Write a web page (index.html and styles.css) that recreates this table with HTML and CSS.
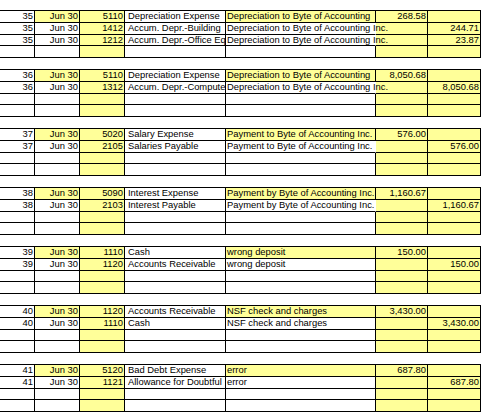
FILE: index.html
```html
<!DOCTYPE html>
<html>
<head>
<meta charset="utf-8">
<link rel="stylesheet" href="styles.css">
</head>
<body>
<div class="sheet">
  <div class="entry">
    <div class="c n">35</div><div class="c n y">Jun 30</div><div class="c n y">5110</div><div class="c d">Depreciation Expense</div><div class="c e y">Depreciation to Byte of Accounting</div><div class="c n y">268.58</div><div class="c n y"></div>
    <div class="c n">35</div><div class="c n">Jun 30</div><div class="c n y">1412</div><div class="c d">Accum. Depr.-Building</div><div class="c e ov">Depreciation to Byte of Accounting Inc.</div><div class="c n y"></div><div class="c n y">244.71</div>
    <div class="c n">35</div><div class="c n">Jun 30</div><div class="c n y">1212</div><div class="c d">Accum. Depr.-Office Eq</div><div class="c e ov">Depreciation to Byte of Accounting Inc.</div><div class="c n y"></div><div class="c n y">23.87</div>
    <div class="c"></div><div class="c"></div><div class="c y"></div><div class="c"></div><div class="c"></div><div class="c y"></div><div class="c y"></div>
  </div>
  <div class="entry">
    <div class="c n">36</div><div class="c n y">Jun 30</div><div class="c n y">5110</div><div class="c d">Depreciation Expense</div><div class="c e y">Depreciation to Byte of Accounting</div><div class="c n y">8,050.68</div><div class="c n y"></div>
    <div class="c n">36</div><div class="c n">Jun 30</div><div class="c n y">1312</div><div class="c d">Accum. Depr.-Compute</div><div class="c e ov">Depreciation to Byte of Accounting Inc.</div><div class="c n y"></div><div class="c n y">8,050.68</div>
    <div class="c"></div><div class="c"></div><div class="c y"></div><div class="c"></div><div class="c"></div><div class="c y"></div><div class="c y"></div>
    <div class="c"></div><div class="c"></div><div class="c y"></div><div class="c"></div><div class="c"></div><div class="c y"></div><div class="c y"></div>
  </div>
  <div class="entry">
    <div class="c n">37</div><div class="c n y">Jun 30</div><div class="c n y">5020</div><div class="c d">Salary Expense</div><div class="c e y">Payment to Byte of Accounting Inc.</div><div class="c n y">576.00</div><div class="c n y"></div>
    <div class="c n">37</div><div class="c n">Jun 30</div><div class="c n y">2105</div><div class="c d">Salaries Payable</div><div class="c e ov">Payment to Byte of Accounting Inc.</div><div class="c n y"></div><div class="c n y">576.00</div>
    <div class="c"></div><div class="c"></div><div class="c y"></div><div class="c"></div><div class="c"></div><div class="c y"></div><div class="c y"></div>
    <div class="c"></div><div class="c"></div><div class="c y"></div><div class="c"></div><div class="c"></div><div class="c y"></div><div class="c y"></div>
  </div>
  <div class="entry">
    <div class="c n">38</div><div class="c n y">Jun 30</div><div class="c n y">5090</div><div class="c d">Interest Expense</div><div class="c e y">Payment by Byte of Accounting Inc.</div><div class="c n y">1,160.67</div><div class="c n y"></div>
    <div class="c n">38</div><div class="c n">Jun 30</div><div class="c n y">2103</div><div class="c d">Interest Payable</div><div class="c e ov">Payment by Byte of Accounting Inc.</div><div class="c n y"></div><div class="c n y">1,160.67</div>
    <div class="c"></div><div class="c"></div><div class="c y"></div><div class="c"></div><div class="c"></div><div class="c y"></div><div class="c y"></div>
    <div class="c"></div><div class="c"></div><div class="c y"></div><div class="c"></div><div class="c"></div><div class="c y"></div><div class="c y"></div>
  </div>
  <div class="entry">
    <div class="c n">39</div><div class="c n y">Jun 30</div><div class="c n y">1110</div><div class="c d">Cash</div><div class="c e y">wrong deposit</div><div class="c n y">150.00</div><div class="c n y"></div>
    <div class="c n">39</div><div class="c n">Jun 30</div><div class="c n y">1120</div><div class="c d">Accounts Receivable</div><div class="c e">wrong deposit</div><div class="c n y"></div><div class="c n y">150.00</div>
    <div class="c"></div><div class="c"></div><div class="c y"></div><div class="c"></div><div class="c"></div><div class="c y"></div><div class="c y"></div>
    <div class="c"></div><div class="c"></div><div class="c y"></div><div class="c"></div><div class="c"></div><div class="c y"></div><div class="c y"></div>
  </div>
  <div class="entry">
    <div class="c n">40</div><div class="c n y">Jun 30</div><div class="c n y">1120</div><div class="c d">Accounts Receivable</div><div class="c e y">NSF check and charges</div><div class="c n y">3,430.00</div><div class="c n y"></div>
    <div class="c n">40</div><div class="c n">Jun 30</div><div class="c n y">1110</div><div class="c d">Cash</div><div class="c e">NSF check and charges</div><div class="c n y"></div><div class="c n y">3,430.00</div>
    <div class="c"></div><div class="c"></div><div class="c y"></div><div class="c"></div><div class="c"></div><div class="c y"></div><div class="c y"></div>
    <div class="c"></div><div class="c"></div><div class="c y"></div><div class="c"></div><div class="c"></div><div class="c y"></div><div class="c y"></div>
  </div>
  <div class="entry">
    <div class="c n">41</div><div class="c n y">Jun 30</div><div class="c n y">5120</div><div class="c d">Bad Debt Expense</div><div class="c e y">error</div><div class="c n y">687.80</div><div class="c n y"></div>
    <div class="c n">41</div><div class="c n">Jun 30</div><div class="c n y">1121</div><div class="c d">Allowance for Doubtful</div><div class="c e">error</div><div class="c n y"></div><div class="c n y">687.80</div>
    <div class="c"></div><div class="c"></div><div class="c y"></div><div class="c"></div><div class="c"></div><div class="c y"></div><div class="c y"></div>
    <div class="c"></div><div class="c"></div><div class="c y"></div><div class="c"></div><div class="c"></div><div class="c y"></div><div class="c y"></div>
  </div>
</div>
</body>
</html>
```

FILE: styles.css
```css
* { box-sizing: border-box; }

body {
  margin: 0;
  background: #ffffff;
  color: #000000;
  font-family: "Liberation Sans", Arial, sans-serif;
  font-size: 9.4px;
}

.sheet {
  display: flex;
  flex-direction: column;
  gap: 10.8px;
  padding-top: 10px;
  width: 481px;
}

.entry {
  display: grid;
  grid-template-columns: 35px 45px 45px 101px 150px 52px 53px;
  grid-auto-rows: 11.8px;
  border-top: 1px solid #000;
}

.c {
  border-right: 1px solid #000;
  border-bottom: 1px solid #000;
  white-space: nowrap;
  overflow: hidden;
  line-height: 10px;
  padding: 0 1px;
  background: #ffffff;
}

.n { text-align: right; }
.d { padding-left: 3px; }
.e { padding-left: 1px; }
.y { background: #ffff99; }

.ov {
  overflow: visible;
  z-index: 1;
  border-right-color: transparent;
}
```
